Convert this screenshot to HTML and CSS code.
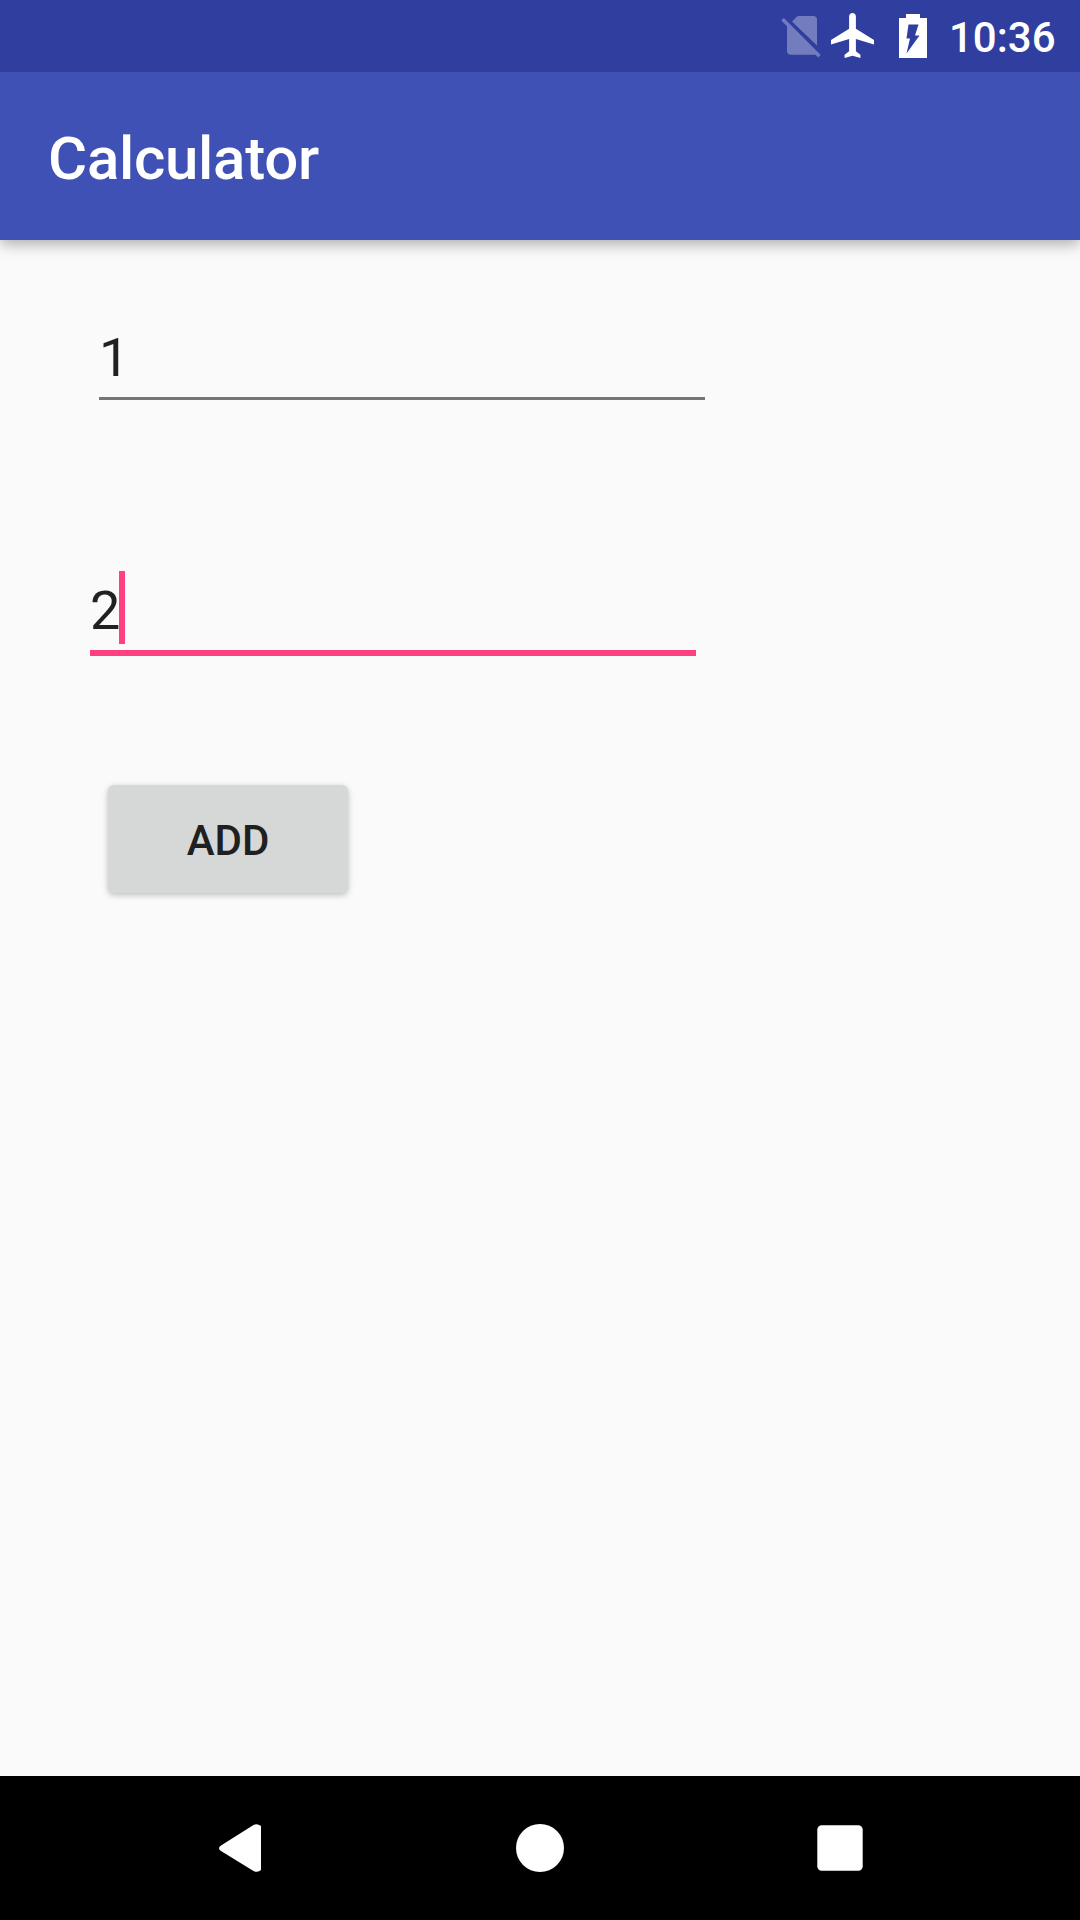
FILE: index.html
```html
<!DOCTYPE html>
<html lang="en">
<head>
<meta charset="utf-8">
<title>Calculator</title>
<link rel="stylesheet" href="styles.css">
</head>
<body>
<div class="screen">
  <div class="status-bar">
    <svg class="icon-sim" width="40" height="44" viewBox="0 0 40 44">
      <path d="M11 5.500L15.500 1Q16.500 0 18.500 0H32Q36 0 36 4V29.500Z M6 10L34.500 38.700H10Q6 38.700 6 34.700Z M0.300 4.500L2.800 2L39.700 38.900L37.200 41.400Z"/>
    </svg>
    <svg class="icon-plane" width="43" height="45" viewBox="2 2 19 20" preserveAspectRatio="none">
      <path d="M21 16v-2l-8-5V3.500c0-.83-.67-1.500-1.500-1.500S10 2.670 10 3.500V9l-8 5v2l8-2.500V19l-2 1.500V22l3.500-1 3.500 1v-1.500L13 19v-5.500l8 2.500z"/>
    </svg>
    <svg class="icon-battery" width="28" height="44" viewBox="0 0 28 44">
      <path fill-rule="evenodd" d="M7 0H21V4H28V44H0V4H7Z M9.500 10.500H19.500L16 21.500H20.500L7.500 39.500L11 24.500H7.500Z"/>
    </svg>
    <span class="clock">10:36</span>
  </div>
  <header class="app-bar"><h1 class="title">Calculator</h1></header>
  <main class="content">
    <div class="field field-first">1</div>
    <div class="field field-active">2<span class="caret"></span></div>
    <button class="add-button" type="button">ADD</button>
  </main>
  <nav class="nav-bar">
    <svg class="nav-icon" width="48" height="48" viewBox="0 0 48 48"><path d="M5 21.500L37.500 1Q41 -1 45 2V46Q42 49 37.500 47L5 27Q1 24 5 21.500Z"/></svg>
    <svg class="nav-icon" width="48" height="48" viewBox="0 0 48 48"><circle cx="24" cy="24" r="24"/></svg>
    <svg class="nav-icon" width="48" height="48" viewBox="0 0 48 48"><rect x="1.300" y="1.300" width="45.400" height="45.400" rx="4.500"/></svg>
  </nav>
</div>
</body>
</html>
```
FILE: styles.css
```css
* { box-sizing: border-box; }

body {
  margin: 0;
  background: #fafafa;
  color: #202122;
  font-family: Roboto, sans-serif;
}

.screen {
  display: flex;
  flex-direction: column;
  width: 1080px;
  height: 1920px;
}

.status-bar {
  display: flex;
  justify-content: flex-end;
  flex: none;
  height: 72px;
  padding-right: 24px;
  background: #303f9f;
  fill: #fff;
  color: #fff;
}

.icon-sim { margin: 16px 10px 0 0; opacity: 0.32; }
.icon-plane { margin: 13px 25px 0 0; }
.icon-battery { margin: 14px 22px 0 0; }

.clock {
  width: 107px;
  font-size: 42px;
  font-weight: 500;
  line-height: 76px;
}

.app-bar {
  flex: none;
  height: 168px;
  padding: 48px 48px 0;
  background: #3f51b5;
  box-shadow: 0 4px 14px rgba(0, 0, 0, 0.32);
  clip-path: inset(0 0 -30px);
}

.title {
  margin: 0;
  color: #fff;
  font-size: 60px;
  font-weight: 500;
  letter-spacing: -0.28px;
  line-height: 77px;
}

.content {
  display: flex;
  flex: 1;
  flex-direction: column;
  align-items: flex-start;
  padding-top: 81px;
}

.field {
  position: relative;
  width: 606px;
  padding-bottom: 3px;
  font-size: 54px;
  line-height: 73px;
}

.field-first {
  margin-left: 99px;
  border-bottom: 3px solid #757575;
}

.field-active {
  margin: 174px 0 0 90px;
  border-bottom: 6px solid #ff4081;
}

.caret {
  position: absolute;
  top: -3px;
  left: 29px;
  width: 6px;
  height: 73px;
  background: #ff4081;
}

.add-button {
  width: 240px;
  height: 108px;
  margin: 129px 0 0 108px;
  padding: 2px 0 0;
  border: 0;
  border-radius: 6px;
  background: #d6d7d7;
  box-shadow: 0 2px 6px rgba(0, 0, 0, 0.25);
  color: #202020;
  font: 500 42px Roboto, sans-serif;
}

.nav-bar {
  display: flex;
  flex: none;
  justify-content: center;
  gap: 252px;
  height: 144px;
  padding-top: 48px;
  background: #000;
  fill: #fff;
}
```
